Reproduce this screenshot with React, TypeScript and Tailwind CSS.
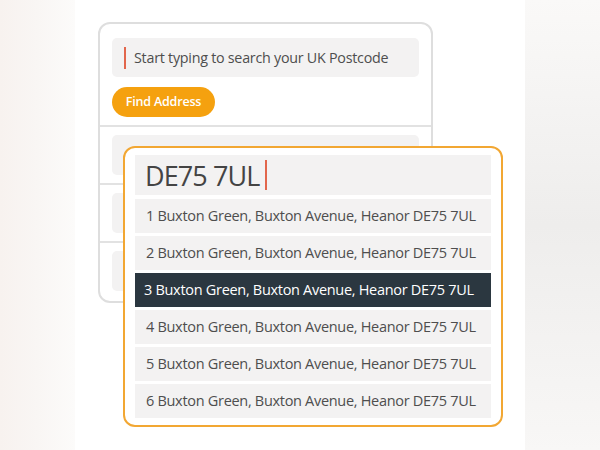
import React from 'react'

// Postcode lookup mock — back card with empty fields, dropdown of results on top.

const addresses = [1, 2, 3, 4, 5, 6].map((n) => `${n} Buxton Green, Buxton Avenue, Heanor DE75 7UL`)

function Caret({ className = '' }: { className?: string }) {
  return <span className={`inline-block w-[2px] bg-[#e2664c] ${className}`} />
}

export default function App() {
  return (
    <div
      className="flex h-[450px] w-[600px] overflow-hidden bg-white"
      style={{ fontFamily: '"Open Sans", "Liberation Sans", sans-serif' }}
    >
      {/* left faded strip */}
      <div className="h-full w-[75px] bg-gradient-to-r from-[#f7f2ef] via-[#f9f6f4] to-[#fcfbfa]" />

      {/* white product area */}
      <div className="relative h-full w-[450px] bg-white pl-[23px] pt-[22px]">
        <div className="w-[335px] rounded-[12px] border-2 border-[#dedede] bg-white">
          <div className="px-3 pb-2 pt-[14px]">
            <div className="flex h-[39px] items-center rounded-[5px] bg-[#f3f2f2] pl-3">
              <Caret className="h-[22px]" />
              <span className="ml-[8px] text-[14.3px] tracking-[-0.25px] text-[#4e4e4e]">
                Start typing to search your UK Postcode
              </span>
            </div>
            <button className="mt-[10px] flex h-[30px] w-[103px] items-center justify-center rounded-full bg-[#f5a10f] text-[12.5px] font-semibold tracking-[-0.2px] text-white">
              Find Address
            </button>
          </div>
          <div className="border-t-2 border-[#e2e2e2] px-3 py-2">
            <div className="h-[40px] rounded-[5px] bg-[#f3f2f2]" />
          </div>
          <div className="border-t-2 border-[#e2e2e2] px-3 py-2">
            <div className="h-[40px] rounded-[5px] bg-[#f3f2f2]" />
          </div>
          <div className="border-t-2 border-[#e2e2e2] px-3 pb-[10px] pt-2">
            <div className="h-[40px] rounded-[5px] bg-[#f3f2f2]" />
          </div>
        </div>

        {/* results dropdown overlapping the card */}
        <div className="absolute left-[48px] top-[146px] w-[380px] rounded-[12px] border-2 border-[#f2a733] bg-white px-[10px] pb-[7px] pt-[7px]">
          <div className="flex h-[40px] items-center bg-[#f3f2f2] pl-[10px]">
            <span className="text-[27px] leading-none tracking-[-0.9px] text-[#444]">DE75 7UL</span>
            <Caret className="ml-[5px] h-[30px]" />
          </div>
          <div className="mt-[4px] flex flex-col gap-[3px]">
            {addresses.map((a, i) =>
              i === 2 ? (
                <div key={i} className="flex h-[34px] items-center bg-[#2b3740] pl-[9px] text-[14.5px] tracking-[-0.3px] text-white">
                  {a}
                </div>
              ) : (
                <div key={i} className="flex h-[34px] items-center bg-[#f3f2f2] pl-[11px] text-[14.5px] tracking-[-0.3px] text-[#4e4e4e]">
                  {a}
                </div>
              )
            )}
          </div>
        </div>
      </div>

      {/* right faded strip */}
      <div className="h-full flex-1 bg-gradient-to-b from-[#faf9f8] via-[#eeedec] to-[#f8f7f6]" />
    </div>
  )
}
